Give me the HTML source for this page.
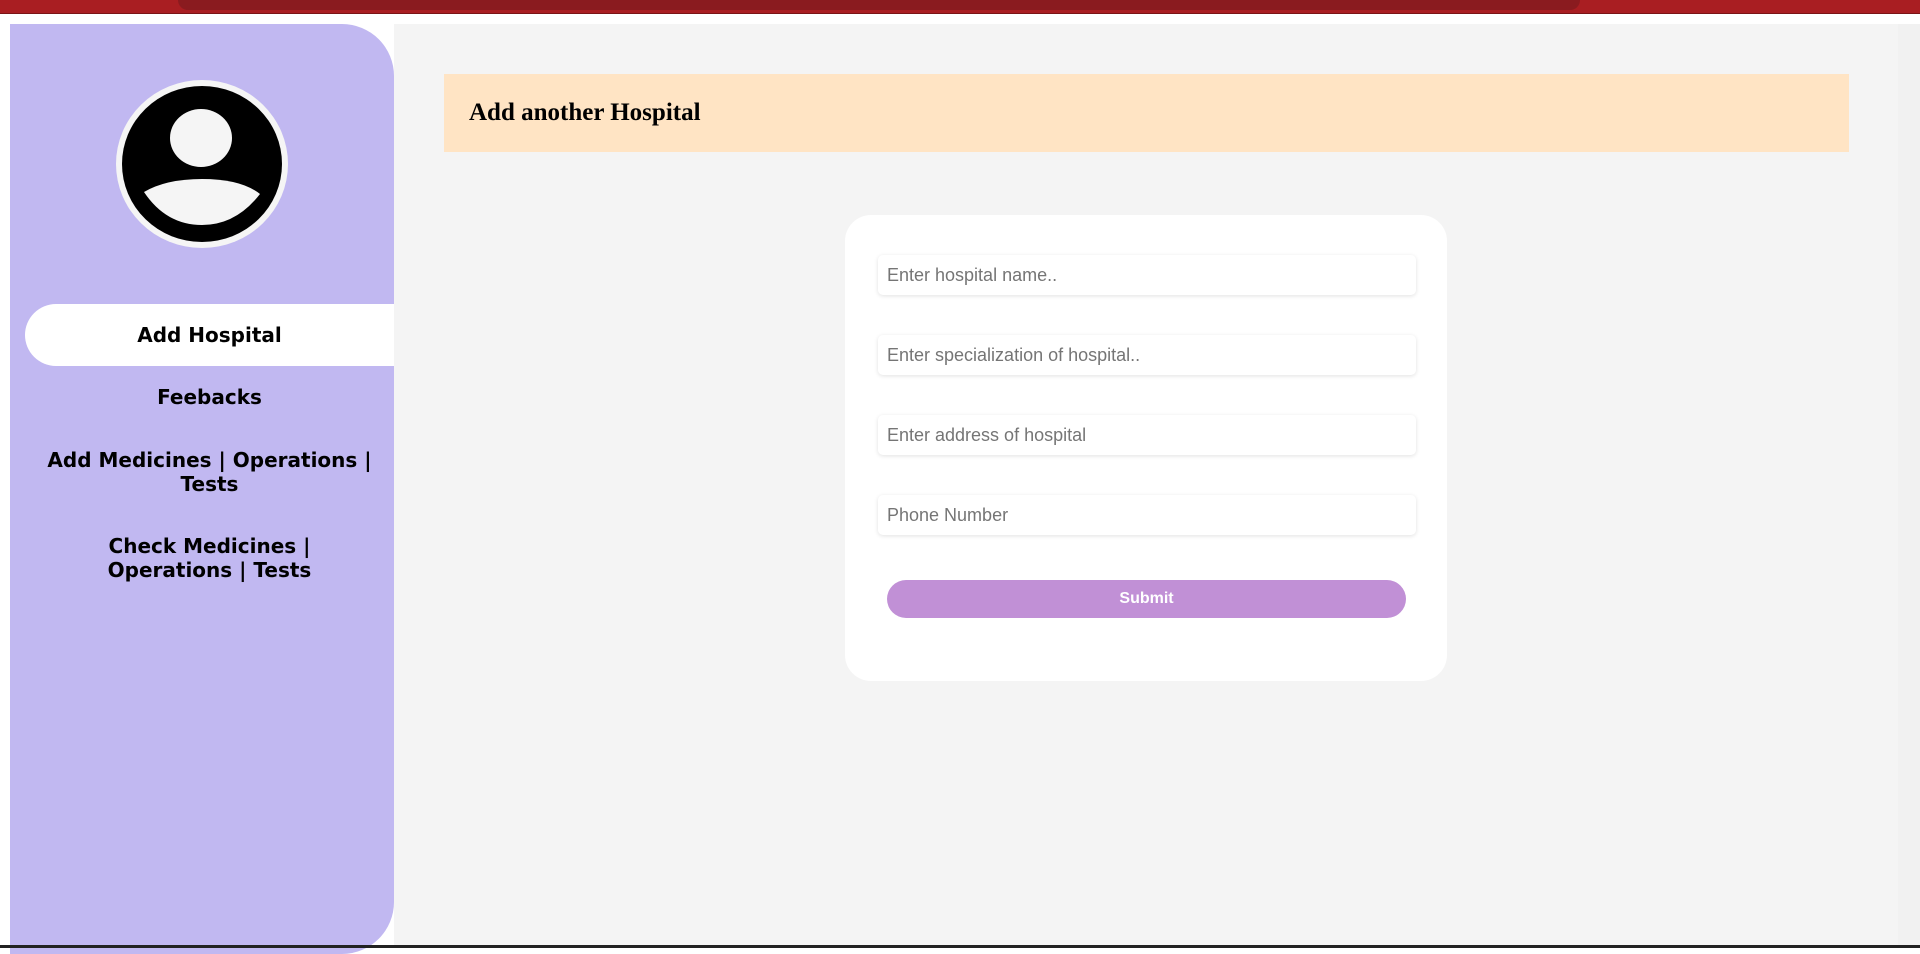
<!DOCTYPE html>
<html><head><meta charset="utf-8"><style>
*{box-sizing:border-box;margin:0;padding:0}
html,body{width:1920px;height:948px;overflow:hidden;background:#fff;font-family:"Liberation Sans",sans-serif}
.top{position:absolute;left:0;top:0;width:1920px;height:14px;background:#a91e22;border-bottom:1px solid #7a1416}
.url{position:absolute;left:178px;top:0;width:1402px;height:10px;background:#8a1b1f;border-radius:0 0 14px 14px}
.side{position:absolute;left:10px;top:24px;width:384px;height:930px;background:#c1b8f1;border-radius:0 52px 52px 0}
.av{position:absolute;left:106px;top:56px;width:172px;height:168px}
.nav{position:absolute;left:15px;width:369px;text-align:center;font-family:"DejaVu Sans",sans-serif;font-weight:bold;font-size:20px;line-height:24px;color:#000}
.act{background:#fff;border-radius:31px 0 0 31px;height:62px;line-height:62px;top:280px}
.main{position:absolute;left:394px;top:24px;width:1504px;height:924px;background:#f4f4f4}
.sb{position:absolute;left:1898px;top:24px;width:22px;height:924px;background:#f1f1f1}
.hdr{position:absolute;left:444px;top:74px;width:1405px;height:78px;background:#ffe4c4;font-family:"Liberation Serif",serif;font-weight:bold;font-size:25px;line-height:78px;padding-left:25px;color:#000}
.card{position:absolute;left:845px;top:215px;width:602px;height:466px;background:#fff;border-radius:26px}
.in{position:absolute;left:878px;width:538px;height:40px;background:#fff;border-radius:5px;box-shadow:0 1px 4px rgba(0,0,0,.12);font-size:18px;color:#757575;line-height:40px;padding-left:9px}
.btn{position:absolute;left:887px;top:580px;width:519px;height:38px;background:#c190d6;border-radius:19px;color:#fff;font-weight:bold;font-size:16px;text-align:center;line-height:38px}
.bot{position:absolute;left:0;top:945px;width:1920px;height:3px;background:#222}
</style></head><body>
<div class="top"><div class="url"></div></div>
<div class="main"></div>
<div class="sb"></div>
<div class="side">
<svg class="av" viewBox="0 0 172 168"><ellipse cx="86" cy="84" rx="86" ry="84" fill="#f5f5f5"/><ellipse cx="86" cy="84" rx="80" ry="78" fill="#000"/><ellipse cx="85" cy="58" rx="31" ry="29" fill="#f5f5f5"/><path d="M28 112 Q50 99 86 99 Q125 99 144 114 Q120 145 86 145 Q50 145 28 112Z" fill="#f5f5f5"/></svg>
<div class="nav act">Add Hospital</div>
<div class="nav" style="top:361px">Feebacks</div>
<div class="nav" style="top:424px">Add Medicines | Operations |<br>Tests</div>
<div class="nav" style="top:510px">Check Medicines |<br>Operations | Tests</div>
</div>
<div class="hdr">Add another Hospital</div>
<div class="card"></div>
<div class="in" style="top:255px">Enter hospital name..</div>
<div class="in" style="top:335px">Enter specialization of hospital..</div>
<div class="in" style="top:415px">Enter address of hospital</div>
<div class="in" style="top:495px">Phone Number</div>
<div class="btn">Submit</div>
<div class="bot"></div>
</body></html>
